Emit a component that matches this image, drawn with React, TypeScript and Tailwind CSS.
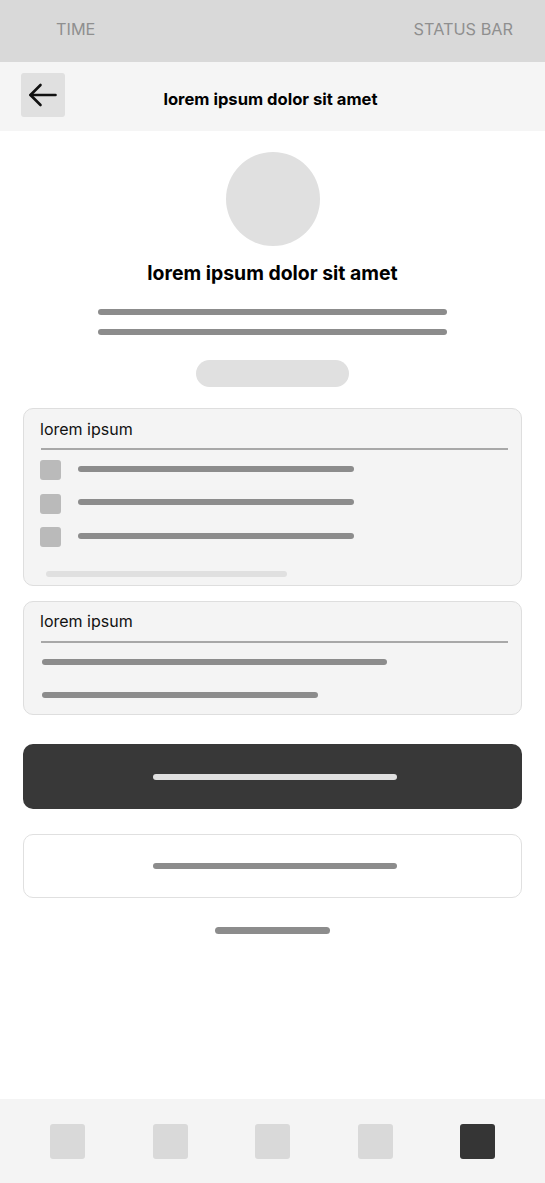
import React from 'react'

const Bar = ({ className }: { className: string }) => <div className={`h-[6px] rounded-full ${className}`} />

function BackArrow() {
  return (
    <svg width="44" height="44" viewBox="0 0 44 44" fill="none" stroke="#111" strokeWidth={2.6} strokeLinecap="round" strokeLinejoin="round">
      <path d="M34.5 22H9.5" />
      <path d="M19.5 12 9.5 22l10 10" />
    </svg>
  )
}

export default function App() {
  const rows = [0, 1, 2]
  const tabs = [false, false, false, false, true]

  return (
    <div className="h-[1183px] w-[545px] flex flex-col bg-white overflow-hidden font-['Inter','Noto_Sans',sans-serif] text-black">
      {/* status bar */}
      <div className="h-[62px] shrink-0 bg-[#d9d9d9] flex items-center justify-between pl-[56px] pr-[32px] pb-[3px] text-[16.3px] text-[#8f8f8f]">
        <span>TIME</span>
        <span>STATUS BAR</span>
      </div>

      {/* header */}
      <div className="h-[69px] shrink-0 bg-[#f5f5f5] grid grid-cols-[44px_1fr_44px] items-start px-[21px] pt-[11px]">
        <button className="w-[44px] h-[44px] rounded-[3px] bg-[#e0e0e0] flex items-center justify-center">
          <BackArrow />
        </button>
        <div className="mt-[14px] text-center text-[16.6px] leading-6 font-bold pr-[4px]">lorem ipsum dolor sit amet</div>
        <div />
      </div>

      <main className="flex-1 flex flex-col">
        <div className="flex flex-col items-center pt-[21px]">
          <div className="w-[94px] h-[94px] rounded-full bg-[#e0e0e0] ml-px" />
          <div className="mt-[13px] text-[19.4px] leading-[28px] font-bold">lorem ipsum dolor sit amet</div>
          <div className="mt-[22px] w-[349px] flex flex-col gap-[14px]">
            <Bar className="bg-[#8c8c8c]" />
            <Bar className="bg-[#8c8c8c]" />
          </div>
          <div className="mt-[25px] w-[153px] h-[27px] rounded-full bg-[#e0e0e0]" />
        </div>

        <div className="mx-[23px] mt-[21px] flex flex-col gap-[15px]">
          {/* card 1 */}
          <div className="rounded-[10px] border border-[#dedede] bg-[#f4f4f4] pl-[16px] pr-[13px] pt-[8px] pb-[8px]">
            <div className="text-[16px] leading-6 text-[#111]">lorem ipsum</div>
            <div className="mt-[7px] ml-px h-[2px] bg-[#a8a8a8]" />
            <div className="mt-[10px] flex flex-col gap-[13.5px]">
              {rows.map((r) => (
                <div key={r} className="flex items-center gap-[17px]">
                  <div className="w-[21px] h-[20px] rounded-[3px] bg-[#bababa]" />
                  <Bar className="w-[276px] bg-[#8c8c8c] -mt-[3px]" />
                </div>
              ))}
            </div>
            <Bar className="mt-[24px] ml-[6px] w-[241px] bg-[#e0e0e0]" />
          </div>

          {/* card 2 */}
          <div className="rounded-[10px] border border-[#dedede] bg-[#f4f4f4] pl-[16px] pr-[13px] pt-[7px] pb-[16px]">
            <div className="text-[16px] leading-6 text-[#111]">lorem ipsum</div>
            <div className="mt-[8px] ml-px h-[2px] bg-[#a8a8a8]" />
            <Bar className="mt-[16px] ml-[2px] w-[345px] bg-[#8c8c8c]" />
            <Bar className="mt-[27px] ml-[2px] w-[276px] bg-[#8c8c8c]" />
          </div>
        </div>

        <div className="mx-[23px] mt-[29px] flex flex-col gap-[25px]">
          <button className="h-[65px] rounded-[10px] bg-[#383838] flex items-center justify-center pl-[5px]">
            <Bar className="w-[244px] bg-[#e0e0e0]" />
          </button>
          <button className="h-[64px] rounded-[10px] border border-[#e0e0e0] bg-white flex items-center justify-center pl-[5px]">
            <Bar className="w-[244px] bg-[#8c8c8c]" />
          </button>
        </div>

        <div className="mt-[29px] flex justify-center">
          <div className="w-[115px] h-[7px] rounded-full bg-[#8c8c8c]" />
        </div>
      </main>

      {/* bottom nav */}
      <nav className="h-[84px] shrink-0 bg-[#f4f4f4] flex items-center justify-between px-[50px]">
        {tabs.map((active, i) => (
          <div key={i} className={`w-[35px] h-[35px] rounded-[3px] ${active ? 'bg-[#353535]' : 'bg-[#d9d9d9]'}`} />
        ))}
      </nav>
    </div>
  )
}
